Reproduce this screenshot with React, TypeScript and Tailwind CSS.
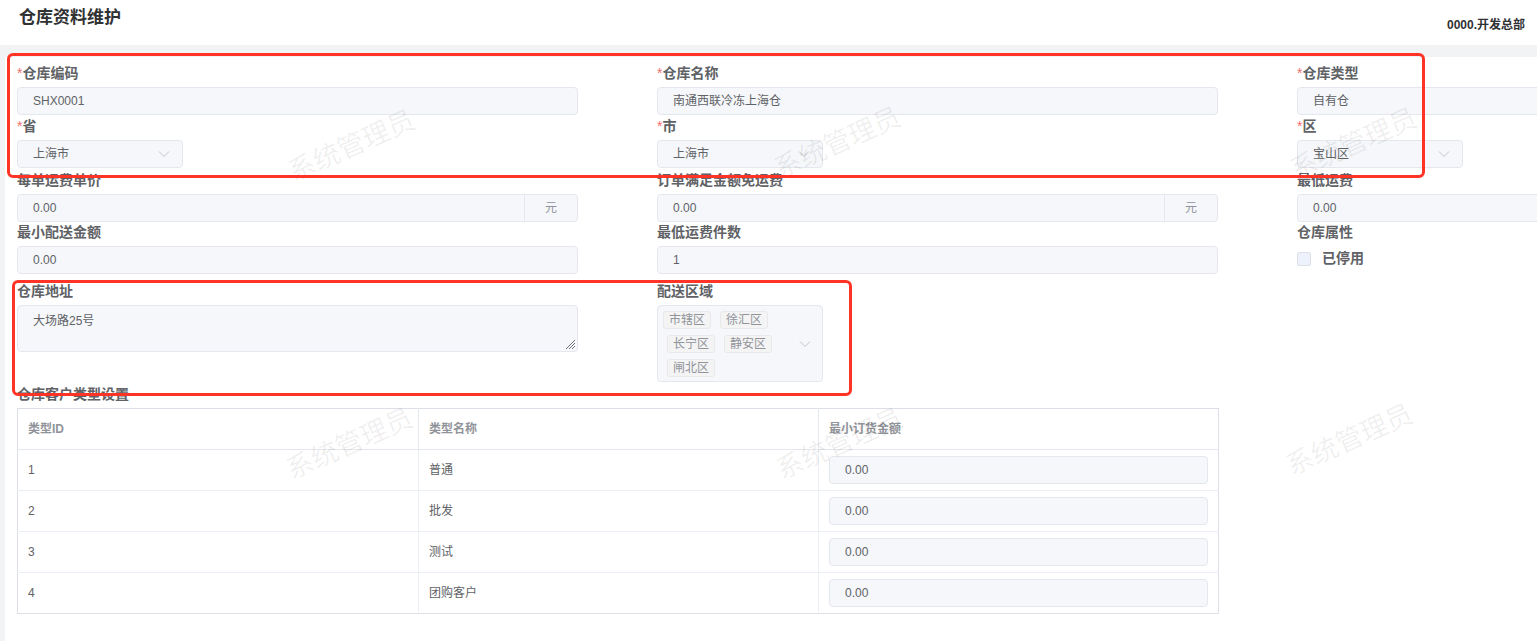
import React from 'react';

const font = "font-['Liberation_Sans','Noto_Sans_CJK_SC',sans-serif]";

const Chevron = () => (
  <svg width="12" height="8" viewBox="0 0 12 8" fill="none">
    <polyline points="1,1.5 6,6.5 11,1.5" stroke="#c0c4cc" strokeWidth="1" />
  </svg>
);

const Label = ({ text, required }: { text: string; required?: boolean }) => (
  <div className="h-[20px] leading-[20px] text-[14px] font-bold text-[#606266] mb-[4px] whitespace-nowrap">
    {required && <span className="text-[#f56c6c] font-normal">*</span>}
    {text}
  </div>
);

const Input = ({ value, unit }: { value: string; unit?: string }) => (
  <div className="h-[28px] w-[561px] flex bg-[#f5f7fa] border border-[#e4e7ed] rounded-[4px] text-[12px] text-[#606266]">
    <div className="flex-1 pl-[15px] flex items-center">{value}</div>
    {unit && (
      <div className="w-[53px] border-l border-[#e4e7ed] flex items-center justify-center text-[#909399]">{unit}</div>
    )}
  </div>
);

const Select = ({ value }: { value: string }) => (
  <div className="h-[28px] w-[166px] flex items-center justify-between bg-[#f5f7fa] border border-[#e4e7ed] rounded-[4px] text-[12px] text-[#606266] pl-[15px] pr-[12px]">
    <span>{value}</span>
    <Chevron />
  </div>
);

const Tag = ({ text }: { text: string }) => (
  <span className="h-[18px] px-[5px] flex items-center bg-[#f4f4f5] border border-[#e9e9eb] rounded-[3px] text-[12px] text-[#909399]">
    {text}
  </span>
);

const Watermark = ({ x, y }: { x: number; y: number }) => (
  <div
    className="absolute pointer-events-none text-[27px] leading-[30px] text-black/[0.065] whitespace-nowrap -rotate-[24deg]"
    style={{ left: x - 68, top: y - 15 }}
  >
    系统管理员
  </div>
);

const rows = [
  { id: '1', name: '普通' },
  { id: '2', name: '批发' },
  { id: '3', name: '测试' },
  { id: '4', name: '团购客户' },
];

export default function App() {
  return (
    <div className={`relative w-full h-[641px] overflow-hidden bg-[#f2f3f5] ${font}`}>
      {/* header */}
      <div className="h-[45px] bg-white flex justify-between">
        <h1 className="pl-[19px] pt-[6px] text-[17px] leading-[24px] font-bold text-[#303133]">仓库资料维护</h1>
        <div className="pr-[12px] pt-[17px] text-[12px] leading-[16px] font-bold text-[#303133]">0000.开发总部</div>
      </div>

      {/* card */}
      <div className="mt-[12px] ml-[5px] bg-white h-[600px] pl-[12px] pt-[6px]">
        <div className="grid grid-cols-[561px_561px_561px] gap-x-[79px]">
          <div>
            <Label text="仓库编码" required />
            <Input value="SHX0001" />
          </div>
          <div>
            <Label text="仓库名称" required />
            <Input value="南通西联冷冻上海仓" />
          </div>
          <div>
            <Label text="仓库类型" required />
            <Input value="自有仓" />
          </div>
        </div>

        <div className="grid grid-cols-[561px_561px_561px] gap-x-[79px] mt-[1px]">
          <div>
            <Label text="省" required />
            <Select value="上海市" />
          </div>
          <div>
            <Label text="市" required />
            <Select value="上海市" />
          </div>
          <div>
            <Label text="区" required />
            <Select value="宝山区" />
          </div>
        </div>

        <div className="grid grid-cols-[561px_561px_561px] gap-x-[79px] mt-[2px]">
          <div>
            <Label text="每单运费单价" />
            <Input value="0.00" unit="元" />
          </div>
          <div>
            <Label text="订单满足金额免运费" />
            <Input value="0.00" unit="元" />
          </div>
          <div>
            <Label text="最低运费" />
            <Input value="0.00" />
          </div>
        </div>

        <div className="grid grid-cols-[561px_561px_561px] gap-x-[79px]">
          <div>
            <Label text="最小配送金额" />
            <Input value="0.00" />
          </div>
          <div>
            <Label text="最低运费件数" />
            <Input value="1" />
          </div>
          <div>
            <Label text="仓库属性" />
            <div className="flex items-center h-[25px]">
              <span className="w-[14px] h-[14px] bg-[#edf2fc] border border-[#dcdfe6] rounded-[2px]" />
              <span className="ml-[11px] text-[14px] font-bold text-[#606266]">已停用</span>
            </div>
          </div>
        </div>

        <div className="grid grid-cols-[561px_561px_561px] gap-x-[79px] mt-[7px]">
          <div>
            <Label text="仓库地址" />
            <div className="relative h-[47px] w-[561px] bg-[#f5f7fa] border border-[#e4e7ed] rounded-[4px] text-[12px] text-[#606266] pl-[15px] pt-[6px]">
              大场路25号
              <svg className="absolute right-[1px] bottom-[1px]" width="11" height="11" viewBox="0 0 11 11">
                <line x1="10" y1="1" x2="1" y2="10" stroke="#606266" strokeWidth="0.9" />
                <line x1="10" y1="4" x2="4" y2="10" stroke="#606266" strokeWidth="0.9" />
                <line x1="10" y1="7" x2="7" y2="10" stroke="#606266" strokeWidth="0.9" />
              </svg>
            </div>
          </div>
          <div>
            <Label text="配送区域" />
            <div className="w-[166px] h-[77px] bg-[#f5f7fa] border border-[#e4e7ed] rounded-[4px] flex items-center">
              <div className="flex-1 flex flex-col gap-[6px] pt-[1px]">
                <div className="flex gap-[9px] pl-[5px]">
                  <Tag text="市辖区" />
                  <Tag text="徐汇区" />
                </div>
                <div className="flex gap-[9px] pl-[9px]">
                  <Tag text="长宁区" />
                  <Tag text="静安区" />
                </div>
                <div className="flex pl-[9px]">
                  <Tag text="闸北区" />
                </div>
              </div>
              <div className="pr-[11px]">
                <Chevron />
              </div>
            </div>
          </div>
          <div />
        </div>

        <div className="mt-[2px]">
          <Label text="仓库客户类型设置" />
          <table className="w-[1201px] border-collapse border border-[#dcdfe6] text-[12px] table-fixed">
            <colgroup>
              <col className="w-[401px]" />
              <col className="w-[400px]" />
              <col className="w-[400px]" />
            </colgroup>
            <thead>
              <tr className="h-[41px]">
                <th className="text-left font-bold text-[#909399] pl-[10px] border-r border-b border-[#e4e7ed]">类型ID</th>
                <th className="text-left font-bold text-[#909399] pl-[10px] border-r border-b border-[#e4e7ed]">类型名称</th>
                <th className="text-left font-bold text-[#909399] pl-[10px] border-b border-[#e4e7ed]">最小订货金额</th>
              </tr>
            </thead>
            <tbody>
              {rows.map((r, i) => (
                <tr key={r.id} className={`h-[41px] ${i < rows.length - 1 ? 'border-b border-[#ebeef5]' : ''}`}>
                  <td className="pl-[10px] text-[#606266] border-r border-[#ebeef5]">{r.id}</td>
                  <td className="pl-[10px] text-[#606266] border-r border-[#ebeef5]">{r.name}</td>
                  <td className="px-[10px]">
                    <div className="h-[28px] bg-[#f5f7fa] border border-[#e4e7ed] rounded-[4px] text-[#606266] pl-[15px] flex items-center">0.00</div>
                  </td>
                </tr>
              ))}
            </tbody>
          </table>
        </div>
      </div>

      {/* watermarks */}
      <Watermark x={352} y={146} />
      <Watermark x={838} y={143} />
      <Watermark x={1354} y={144} />
      <Watermark x={350} y={444} />
      <Watermark x={840} y={444} />
      <Watermark x={1350} y={440} />

      {/* annotation boxes */}
      <div className="absolute left-[7px] top-[53px] w-[1418px] h-[125px] border-[3px] border-[#ff3326] rounded-[6px] pointer-events-none" />
      <div className="absolute left-[12px] top-[280px] w-[840px] h-[116px] border-[3px] border-[#ff3326] rounded-[6px] pointer-events-none" />
    </div>
  );
}
